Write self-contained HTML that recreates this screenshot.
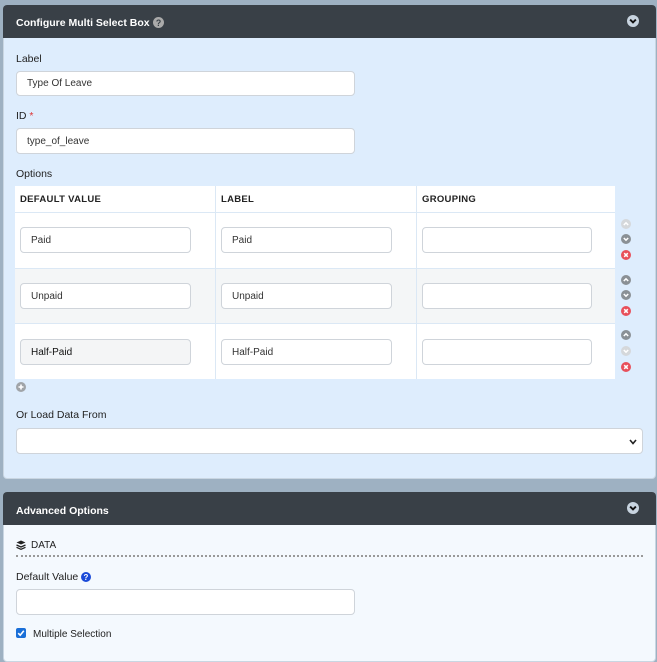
<!DOCTYPE html>
<html><head><style>
*{box-sizing:border-box;margin:0;padding:0}
body{width:657px;height:653px;background:#9eb1c2;font-family:"Liberation Sans",sans-serif;position:relative;overflow:hidden;color:#222}
.a{position:absolute}
.hd{background:#394047;color:#fff;font-weight:bold;font-size:10.5px;border-radius:4px 4px 0 0}
.lbl{font-size:10.5px;color:#222}
.in{position:absolute;background:#fff;border:1px solid #cfd4da;border-radius:4px;font-size:10px;color:#333;padding-left:10px;display:flex;align-items:center}
.th{font-size:9.5px;font-weight:bold;color:#222;letter-spacing:.3px}
svg.ic{position:absolute;width:10px;height:10px}
</style></head><body>
<svg width="0" height="0" style="position:absolute">
<defs>
<symbol id="up" viewBox="0 0 10 10"><circle cx="5" cy="5" r="5"/><path d="M2.8 6 L5 3.8 L7.2 6" fill="none" stroke="#fff" stroke-width="1.5"/></symbol>
<symbol id="dn" viewBox="0 0 10 10"><circle cx="5" cy="5" r="5"/><path d="M2.8 4 L5 6.2 L7.2 4" fill="none" stroke="#fff" stroke-width="1.5"/></symbol>
<symbol id="x" viewBox="0 0 10 10"><circle cx="5" cy="5" r="5"/><path d="M3.2 3.2 L6.8 6.8 M6.8 3.2 L3.2 6.8" fill="none" stroke="#fff" stroke-width="1.5"/></symbol>
<symbol id="plus" viewBox="0 0 10 10"><circle cx="5" cy="5" r="5"/><path d="M5 2.5 V7.5 M2.5 5 H7.5" fill="none" stroke="#fff" stroke-width="1.6"/></symbol>
</defs></svg>
<div class="a" style="left:3px;top:5px;width:653px;height:474px;background:#deedfd;border-radius:4px;border:1px solid #c9d6e2"></div>
<div class="a hd" style="left:3px;top:5px;width:653px;height:33px;padding:12px 0 0 13px">Configure Multi Select Box <svg style="vertical-align:-2px" width="11" height="11" viewBox="0 0 10 10"><circle cx="5" cy="5" r="5" fill="#aaa"/><text x="5" y="8" font-size="8" text-anchor="middle" fill="#394047" font-weight="bold" font-family="Liberation Sans">?</text></svg></div>
<svg class="a" style="left:627px;top:15px" width="12" height="12" viewBox="0 0 10 10"><circle cx="5" cy="5" r="5" fill="#c8d4e0"/><path d="M2.6 3.8 L5 6.2 L7.4 3.8" fill="none" stroke="#111" stroke-width="1.6"/></svg>
<div class="a lbl" style="left:16px;top:53px">Label</div>
<div class="in" style="left:16px;top:71px;width:339px;height:25px">Type Of Leave</div>
<div class="a lbl" style="left:16px;top:110px">ID <span style="color:#d33">*</span></div>
<div class="in" style="left:16px;top:128px;width:339px;height:26px">type_of_leave</div>
<div class="a lbl" style="left:16px;top:168px">Options</div>
<div class="a" style="left:15px;top:186px;width:600px;height:193px;background:#fff"></div>
<div class="a" style="left:15px;top:268px;width:600px;height:55px;background:#f4f6f7"></div>
<div class="a" style="left:15px;top:212px;width:600px;height:1px;background:#dbe8f5"></div>
<div class="a" style="left:15px;top:268px;width:600px;height:1px;background:#dbe8f5"></div>
<div class="a" style="left:15px;top:323px;width:600px;height:1px;background:#dbe8f5"></div>
<div class="a" style="left:215px;top:186px;width:1px;height:193px;background:#dbe8f5"></div>
<div class="a" style="left:416px;top:186px;width:1px;height:193px;background:#dbe8f5"></div>
<div class="a th" style="left:20px;top:194px">DEFAULT VALUE</div>
<div class="a th" style="left:221px;top:194px">LABEL</div>
<div class="a th" style="left:422px;top:194px">GROUPING</div>
<div class="in" style="left:20px;top:227px;width:171px;height:26px">Paid</div>
<div class="in" style="left:221px;top:227px;width:171px;height:26px">Paid</div>
<div class="in" style="left:422px;top:227px;width:170px;height:26px"></div>
<div class="in" style="left:20px;top:283px;width:171px;height:26px">Unpaid</div>
<div class="in" style="left:221px;top:283px;width:171px;height:26px">Unpaid</div>
<div class="in" style="left:422px;top:283px;width:170px;height:26px"></div>
<div class="in" style="left:20px;top:339px;width:171px;height:26px;background:#f4f5f6;color:#111">Half-Paid</div>
<div class="in" style="left:221px;top:339px;width:171px;height:26px">Half-Paid</div>
<div class="in" style="left:422px;top:339px;width:170px;height:26px"></div>
<svg class="ic" style="left:621px;top:219px;fill:#d5d8db"><use href="#up"/></svg>
<svg class="ic" style="left:621px;top:234px;fill:#8a9095"><use href="#dn"/></svg>
<svg class="ic" style="left:621px;top:250px;fill:#e8505b"><use href="#x"/></svg>
<svg class="ic" style="left:621px;top:275px;fill:#8a9095"><use href="#up"/></svg>
<svg class="ic" style="left:621px;top:290px;fill:#8a9095"><use href="#dn"/></svg>
<svg class="ic" style="left:621px;top:306px;fill:#e8505b"><use href="#x"/></svg>
<svg class="ic" style="left:621px;top:330px;fill:#8a9095"><use href="#up"/></svg>
<svg class="ic" style="left:621px;top:346px;fill:#d5d8db"><use href="#dn"/></svg>
<svg class="ic" style="left:621px;top:362px;fill:#e8505b"><use href="#x"/></svg>
<svg class="ic" style="left:16px;top:382px;fill:#a0a4a8"><use href="#plus"/></svg>
<div class="a lbl" style="left:16px;top:409px">Or Load Data From</div>
<div class="in" style="left:16px;top:428px;width:627px;height:26px"><svg style="position:absolute;right:5px;top:10px" width="8" height="6" viewBox="0 0 8 6"><path d="M1 1 L4 4.5 L7 1" fill="none" stroke="#222" stroke-width="1.6"/></svg></div>

<div class="a" style="left:3px;top:492px;width:653px;height:170px;background:#f4f9fe;border-radius:4px;border:1px solid #c9d6e2"></div>
<div class="a hd" style="left:3px;top:492px;width:653px;height:33px;padding:13px 0 0 13px">Advanced Options</div>
<svg class="a" style="left:627px;top:502px" width="12" height="12" viewBox="0 0 10 10"><circle cx="5" cy="5" r="5" fill="#c8d4e0"/><path d="M2.6 3.8 L5 6.2 L7.4 3.8" fill="none" stroke="#111" stroke-width="1.6"/></svg>
<svg class="a" style="left:16px;top:540px" width="10" height="10" viewBox="0 0 10 10"><path d="M5 0.5 L9.5 2.5 L5 4.5 L0.5 2.5Z" fill="#222"/><path d="M0.5 5 L5 7 L9.5 5 M0.5 7.3 L5 9.3 L9.5 7.3" fill="none" stroke="#222" stroke-width="1.3"/></svg>
<div class="a lbl" style="left:31px;top:540px;font-size:10px">DATA</div>
<div class="a" style="left:16px;top:555px;width:627px;border-top:2px dotted #999"></div>
<div class="a lbl" style="left:16px;top:571px">Default Value <svg style="vertical-align:-2px" width="10" height="10" viewBox="0 0 10 10"><circle cx="5" cy="5" r="5" fill="#1a4ad8"/><text x="5" y="8" font-size="8" text-anchor="middle" fill="#fff" font-weight="bold" font-family="Liberation Sans">?</text></svg></div>
<div class="in" style="left:16px;top:589px;width:339px;height:26px"></div>
<svg class="a" style="left:16px;top:628px" width="10" height="10" viewBox="0 0 10 10"><rect width="10" height="10" rx="2" fill="#1a6fd8"/><path d="M2.2 5.2 L4.2 7.2 L7.8 2.8" fill="none" stroke="#fff" stroke-width="1.6"/></svg>
<div class="a lbl" style="left:33px;top:629px;font-size:10px">Multiple Selection</div>
</body></html>
